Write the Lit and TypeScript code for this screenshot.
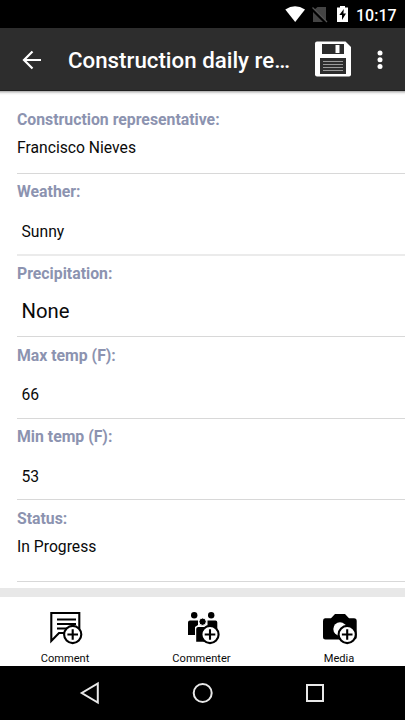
import { LitElement, html, css, svg } from "lit";
import { customElement } from "lit/decorators.js";

interface Field {
  label: string;
  value: string;
  kind: string;
}

const FIELDS: Field[] = [
  { label: "Construction representative:", value: "Francisco Nieves", kind: "first plain" },
  { label: "Weather:", value: "Sunny", kind: "input soft" },
  { label: "Precipitation:", value: "None", kind: "input large" },
  { label: "Max temp (F):", value: "66", kind: "input" },
  { label: "Min temp (F):", value: "53", kind: "input" },
  { label: "Status:", value: "In Progress", kind: "plain" },
];

const plusBadge = (cx: number, cy: number) => svg`
  <circle cx=${cx} cy=${cy} r="8.6" fill="#fff" stroke="#000" stroke-width="2.1"/>
  <path d="M${cx - 5.3} ${cy}h10.6M${cx} ${cy - 5.3}v10.6" stroke="#000" stroke-width="2.1"/>`;

@customElement("app-root")
export class AppRoot extends LitElement {
  static styles = css`
    :host {
      display: flex;
      flex-direction: column;
      width: 405px;
      height: 720px;
      overflow: hidden;
      background: #fff;
      color: #0a0a0a;
      font-family: Roboto, sans-serif;
    }
    svg { display: block; flex: none; }
    .status {
      height: 28px;
      flex: none;
      background: #000;
      color: #fff;
      display: flex;
      justify-content: flex-end;
      align-items: center;
      padding-right: 9px;
      box-sizing: border-box;
    }
    .clock {
      font-size: 16px;
      font-weight: 500;
      line-height: 28px;
      padding-top: 3px;
      width: 40px;
      margin-left: 7px;
      white-space: nowrap;
    }
    .bar {
      height: 63px;
      flex: none;
      box-sizing: border-box;
      background: #2d2d2d;
      border-bottom: 1px solid #202020;
      color: #fff;
      display: flex;
      align-items: center;
    }
    .back { margin: 1px 0 0 20px; }
    .title {
      margin: 2px 0 0 24px;
      width: 246px;
      font-size: 22.3px;
      font-weight: 500;
      line-height: 26px;
      white-space: nowrap;
    }
    .more { margin: 1px 0 0 22px; }
    .form {
      height: 497px;
      flex: none;
      box-sizing: border-box;
      padding-left: 17px;
      background: linear-gradient(#b9b9b9 0 1px, #d6d6d6 1px 2px, #f0f0f0 2px 3px, #fafafa 3px 4px, #fff 4px);
    }
    .field {
      height: 81.6px;
      box-sizing: border-box;
      border-bottom: 1px solid #d8d8d8;
      padding-top: 8.6px;
    }
    .first { height: 83px; padding-top: 19px; }
    .soft { border-bottom: 2px solid #ebebeb; padding-top: 8px; }
    .label {
      font-size: 15.8px;
      line-height: 20px;
      font-weight: 700;
      color: #8c93b0;
    }
    .value { font-size: 15.7px; line-height: 20px; margin-top: 8px; }
    .input .value { margin: 19.4px 0 0 4.5px; }
    .soft .value { margin-top: 20px; }
    .large .value { font-size: 20.3px; margin-top: 16.4px; }
    .divider { height: 9px; flex: none; background: #e8e8e8; }
    .actions { height: 69px; flex: none; display: flex; }
    .action {
      display: flex;
      flex-direction: column;
      align-items: center;
      width: 130px;
      padding-top: 13px;
      font-size: 11.1px;
      line-height: 14px;
    }
    .action span { margin-top: 6px; }
    .actions .action:nth-child(2) { width: 143px; }
    .actions .action:nth-child(3) { width: 132px; }
    .nav {
      height: 54px;
      flex: none;
      background: #000;
      display: flex;
      justify-content: center;
      align-items: center;
      gap: 88px;
    }
  `;

  render() {
    return html`
      <div class="status">
        <svg width="64" height="20" viewBox="285 4 64 20">
          <path d="M285.3 9.5Q295 2.8 305 9.5L295.2 22Z" fill="#fff"/>
          <path d="M317.5 7H326V20.5L314.5 9.5ZM313 12L323 22H313Z" fill="#444"/>
          <path d="M312.5 7.5L327 22" stroke="#555" stroke-width="1.3"/>
          <path d="M337 7.5H340V6H345V7.5H348V22H337Z" fill="#fff"/>
          <path d="M343.8 9L339.3 15H342V20L346 13.5H343.4Z" fill="#000"/>
        </svg>
        <span class="clock">10:17</span>
      </div>
      <div class="bar">
        <svg class="back" width="24" height="24" viewBox="0 0 24 24" fill="none" stroke="#fff" stroke-width="2.2">
          <path d="M21 12H4M12.5 3.5L4 12L12.5 20.5"/>
        </svg>
        <div class="title">Construction daily re…</div>
        <svg width="38" height="38" viewBox="0 0 38 38">
          <path d="M3 1.5H31.5L37 7V34.5Q37 36.5 35 36.5H3Q1 36.5 1 34.5V3.5Q1 1.5 3 1.5Z" fill="#fff"/>
          <path d="M8 4H30V14H8ZM6 18H32V34H6Z" fill="#2d2d2d"/>
          <path d="M21.5 5H25.5V13H21.5Z" fill="#fff"/>
          <path d="M9 21.5H29M9 24.5H29M9 27.5H29M9 30.5H29" stroke="#999" stroke-width="1"/>
        </svg>
        <svg class="more" width="12" height="24" viewBox="0 0 12 24" fill="#fff">
          <circle cx="6" cy="5" r="2.5"/><circle cx="6" cy="11.8" r="2.5"/><circle cx="6" cy="18.6" r="2.5"/>
        </svg>
      </div>
      <div class="form">
        ${FIELDS.map((f) => html`
          <div class="field ${f.kind}">
            <div class="label">${f.label}</div>
            <div class="value">${f.value}</div>
          </div>`)}
      </div>
      <div class="divider"></div>
      <div class="actions">
        <div class="action">
          <svg width="36" height="36" viewBox="47 610 36 36" fill="none" stroke="#000" stroke-width="2.1">
            <path d="M51.3 613H79.3V633H59L51.3 641Z"/>
            <path d="M57 619.5H76M57 624H76M57 628.5H70" stroke-width="2"/>
            ${plusBadge(72.7, 634.5)}
          </svg>
          <span>Comment</span>
        </div>
        <div class="action">
          <svg width="36" height="36" viewBox="184 610 36 36">
            <circle cx="194.2" cy="615.3" r="3.2"/><circle cx="211.2" cy="615.3" r="3.2"/>
            <path d="M190 620.5H198V625L195 627V635H188V622.5Q188 620.5 190 620.5ZM207.5 620.5H215.5Q217.3 620.5 217.3 622.5V631H210L207.5 627Z"/>
            <circle cx="202.6" cy="621.7" r="3.7" stroke="#fff"/>
            <path d="M198.3 627H208V641.8H196.2V629Q196.2 627 198.3 627Z"/>
            ${plusBadge(210, 634.5)}
          </svg>
          <span>Commenter</span>
        </div>
        <div class="action">
          <svg width="36" height="36" viewBox="321 610 36 36">
            <path d="M325 618.3H331L335 614H345L349 618.3H354Q356.7 618.3 356.7 621V637Q356.7 639.5 354 639.5H325.5Q323 639.5 323 637V621Q323 618.3 325 618.3Z"/>
            <circle cx="340" cy="629" r="6.7" fill="#fff"/>
            ${plusBadge(347.2, 634.5)}
          </svg>
          <span>Media</span>
        </div>
      </div>
      <div class="nav">
        <svg width="24" height="24" viewBox="0.7 0 24 24" fill="none" stroke="#e8e8e8" stroke-width="2"><path d="M19.5 2.5V21.5L3.5 12Z"/></svg>
        <svg width="24" height="24" viewBox="0.3 0 24 24" fill="none" stroke="#e8e8e8" stroke-width="2"><circle cx="12" cy="12" r="9"/></svg>
        <svg width="24" height="24" viewBox="0 0 24 24" fill="none" stroke="#e8e8e8" stroke-width="2"><path d="M4 4H20V20H4Z"/></svg>
      </div>
    `;
  }
}
